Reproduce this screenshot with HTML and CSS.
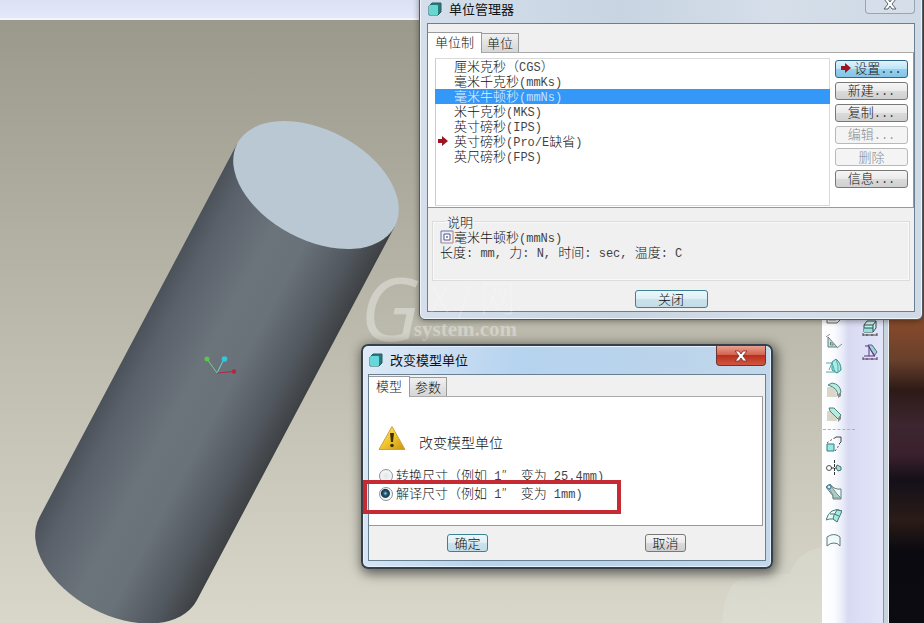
FILE: index.html
```html
<!DOCTYPE html>
<html lang="zh-CN">
<head>
<meta charset="utf-8">
<title>单位管理器</title>
<link rel="stylesheet" href="styles.css">
</head>
<body>
<div class="app">
  <main class="workspace">
    <div class="topbar"></div>
    <svg class="scene" viewBox="0 20 822 603" preserveAspectRatio="xMinYMin slice" aria-hidden="true">
      <defs>
        <linearGradient id="side" x1="0" x2="1" y1="0" y2="0">
          <stop offset="0" stop-color="#4c525a"/>
          <stop offset=".12" stop-color="#5a616a"/>
          <stop offset=".4" stop-color="#6b737b"/>
          <stop offset=".6" stop-color="#697179"/>
          <stop offset=".85" stop-color="#51575e"/>
          <stop offset="1" stop-color="#3e4144"/>
        </linearGradient>
      </defs>
      <path d="M722 623Q724 590 738 580Q760 574 790 574Q796 552 822 547V623Z" fill="#fff" opacity=".13"/>
      <g transform="translate(316 185) rotate(27.900)">
        <path d="M-89 0V423A89 56 0 0 0 89 423V0Z" fill="url(#side)"/>
        <ellipse rx="89" ry="55" fill="#b9c8d3"/>
      </g>
      <g fill="none" stroke-width="1">
        <path d="M217 373L207 359" stroke="#6fd08a"/>
        <path d="M217 373L224 359" stroke="#6fd9d6"/>
        <path d="M217 373L234 371.500" stroke="#a82c48"/>
      </g>
      <circle cx="207" cy="359" r="2.500" fill="#58c84a"/>
      <circle cx="224.500" cy="359" r="2.800" fill="#35c6dc"/>
      <circle cx="234" cy="371.500" r="2.200" fill="#b32743"/>
    </svg>
  </main>

  <aside class="toolbar">
    <div class="tools">
      <svg viewBox="0 0 16 16"><path d="M1 7V13H11L15 9V5" fill="#eee" stroke="#666"/><path d="M3 10H10" stroke="#999"/></svg>
      <svg viewBox="0 0 16 16"><path d="M2 3V13H11ZM4.500 8V11H7.500Z" fill="#c8e8e2" fill-rule="evenodd" stroke="#607c78"/><path d="M0 3L4 0M11 14L16 10" stroke="#889"/></svg>
      <svg viewBox="0 0 16 16"><path d="M6 4L10 1Q15 5 15 12L11 15L6 12Z" fill="#a9ece7" stroke="#368a88"/><path d="M0 5H6L9 14H0M6 5L3 12M10 1L12 8V14" stroke="#55aaa8"/></svg>
      <svg viewBox="0 0 16 16"><path d="M1 5H6Q11 8 11 15H1Z" fill="#d9d8c8"/><path d="M2 3L6 1Q14 2 15 10L12 14Q12 6 2 3Z" fill="#b4ece2" stroke="#51817b"/><path d="M12 13L15 10V14L12 16Z" fill="#888"/></svg>
      <svg viewBox="0 0 16 16"><path d="M1 5H6L11 9V15H1Z" fill="#d9d8c8"/><path d="M3 2H8L15 9L12 13L4 5Z" fill="#b4ece2" stroke="#51817b"/><path d="M12 13L15 9V13L12 16Z" fill="#888"/></svg>
      <hr class="divider">
      <svg viewBox="0 0 16 16"><path d="M1 8H8V15H1Z" fill="#9ce6e3" stroke="#347d7c"/><path d="M8 2.500L10 1H15V6L13 8" stroke="#444"/><path d="M1 7L8 2M9 15L14 8" stroke="#555" stroke-dasharray="2 2"/></svg>
      <svg viewBox="0 0 16 16"><circle cx="3" cy="8" r="2.500" stroke="#555"/><path d="M5 8H11M8.500 0V16" stroke="#333" stroke-dasharray="3 1"/><path d="M11 5L15 7V10L12 11L10 8Z" fill="#a9ddd6" stroke="#446e68"/></svg>
      <svg viewBox="0 0 16 16"><path d="M0 3L4 0Q8 6 15 5V15H7V12Z" fill="#f2fbfb" stroke="#5a807b"/><path d="M2 3L5 2L11 10L15 14H7V11Z" fill="#a6cfc7" stroke="#888"/><circle cx="3" cy="3" r="2" fill="#bff" stroke="#468"/></svg>
      <svg viewBox="0 0 16 16"><path d="M0 12Q2 5 6 3Q11 0 16 3Q12 7 11 14Q8 9 0 12Z" fill="#e7faf7" stroke="#4b7b78"/><path d="M8 7L11 2L16 3L11 14L7 11Z" fill="#a7e8e0" stroke="#4b7b78"/><path d="M4 6Q8 5 13 8" stroke="#4b7b78"/></svg>
      <svg viewBox="0 0 16 16"><path d="M1 14V5Q8 0 14 5V14Q12 11 8 11Q4 11 1 14Z" fill="#effbfb" stroke="#5f7775"/></svg>
    </div>
    <div class="tools tools-b">
      <svg viewBox="0 0 16 16"><path d="M2 5L5 1H14V8L11 12H2Z" fill="#c8f4f2" stroke="#394b4b"/><path d="M2 8H11V12H2Z" fill="#8fe3df"/><path d="M2 5H11V12M11 5L14 1M2 8H11" stroke="#394b4b"/><path d="M1 15H15M1 13V16M15 13V16M5 14V16M10 14V16" stroke="#444"/></svg>
      <svg viewBox="0 0 16 16"><path d="M6 1H10L15 8L12 12Z" fill="#a8cdda" stroke="#4b6b83"/><path d="M3 2H7V12H2M7 3L13 12H7" stroke="#5c2f87"/><path d="M1 15H15M1 13V16M15 13V16M5 14V16M10 14V16" stroke="#523d63"/></svg>
    </div>
  </aside>
  <div class="edge"></div>
  <div class="desktop"></div>
</div>

<section class="window manager" aria-label="单位管理器">
  <header class="titlebar">
    <svg class="cube" viewBox="0 0 14 14"><path d="M1 4L4 1H13V10L10 13H1Z" fill="#2a7a7c" stroke="#245e62"/><rect x="1" y="3" width="9" height="10" rx="1" fill="#66d8cf"/></svg>
    <h1>单位管理器</h1>
    <button class="close" aria-label="关闭窗口"><svg viewBox="0 0 14 12"><path d="M1 1H5L7 4L9 1H13L9 6L13 11H9L7 8L5 11H1L5 6Z" fill="#fff" stroke="#59616a"/></svg></button>
  </header>
  <div class="client">
    <nav class="tabs"><button class="tab on">单位制</button><button class="tab">单位</button></nav>
    <div class="panel systems">
      <ul class="list">
        <li>厘米克秒（<span class="en">CGS</span>）</li>
        <li>毫米千克秒<span class="en">(mmKs)</span></li>
        <li class="selected">毫米牛顿秒<span class="en">(mmNs)</span></li>
        <li>米千克秒<span class="en">(MKS)</span></li>
        <li>英寸磅秒<span class="en">(IPS)</span></li>
        <li class="current"><svg class="arrow" viewBox="0 0 10 10"><path d="M0 3H4V0L10 5L4 10V7H0Z" fill="#9e1420"/></svg>英寸磅秒<span class="en">(Pro/E</span>缺省<span class="en">)</span></li>
        <li>英尺磅秒<span class="en">(FPS)</span></li>
      </ul>
      <div class="actions">
        <button class="btn hot"><svg class="arrow" viewBox="0 0 10 10"><path d="M0 3H4V0L10 5L4 10V7H0Z" fill="#9e1420"/></svg><span>设置<span class="en">...</span></span></button>
        <button class="btn"><span>新建<span class="en">...</span></span></button>
        <button class="btn"><span>复制<span class="en">...</span></span></button>
        <button class="btn" disabled><span>编辑<span class="en">...</span></span></button>
        <button class="btn" disabled><span>删除</span></button>
        <button class="btn"><span>信息<span class="en">...</span></span></button>
      </div>
    </div>
    <fieldset class="notes">
      <legend>说明</legend>
      <p><svg class="note-icon" viewBox="0 0 14 14"><path d="M1 13V1H13" fill="none" stroke="#6670a8"/><path d="M13 1V13H1" fill="none" stroke="#b58080"/><path d="M4 4H10V10H4Z" fill="#fff" stroke="#4a569a"/><path d="M6 6H8V8H6Z" fill="#8a93c0"/></svg>毫米牛顿秒<span class="en">(mmNs)</span></p>
      <p>长度<span class="en">: mm, </span>力<span class="en">: N, </span>时间<span class="en">: sec, </span>温度<span class="en">: C</span></p>
    </fieldset>
    <footer class="foot"><button class="btn ok wide">关闭</button></footer>
  </div>
</section>

<div class="mark" aria-hidden="true"><span class="mark-g">G</span><span class="mark-rest"><span class="mark-x">X / 网</span><span class="mark-s">system.com</span></span></div>

<section class="window convert" aria-label="改变模型单位">
  <header class="titlebar">
    <svg class="cube" viewBox="0 0 14 14"><path d="M1 4L4 1H13V10L10 13H1Z" fill="#2a7a7c" stroke="#245e62"/><rect x="1" y="3" width="9" height="10" rx="1" fill="#66d8dc"/></svg>
    <h2>改变模型单位</h2>
    <button class="close red" aria-label="关闭窗口"><svg viewBox="0 0 14 12"><path d="M1 1H5L7 4L9 1H13L9 6L13 11H9L7 8L5 11H1L5 6Z" fill="#fff" stroke="#8b3a34"/></svg></button>
  </header>
  <div class="client">
    <nav class="tabs"><button class="tab on">模型</button><button class="tab">参数</button></nav>
    <div class="panel choice">
      <div class="prompt">
        <svg class="warn" viewBox="0 0 28 26"><defs><linearGradient id="gold" x1="0" x2="1" y1="0" y2="1"><stop offset="0" stop-color="#ffe98a"/><stop offset=".5" stop-color="#f2c52c"/><stop offset="1" stop-color="#c99212"/></linearGradient></defs><path d="M14 1.500L27 24.500H1Z" fill="url(#gold)" stroke="#cba341" stroke-linejoin="round"/><path d="M12 8H16L15 17H13Z" fill="#3c3208"/><circle cx="14" cy="20.500" r="1.800" fill="#3c3208"/></svg>
        <p>改变模型单位</p>
      </div>
      <label class="option"><input type="radio" name="mode"><span>转换尺寸（例如<span class="en"> 1</span><span class="inch">″</span><span class="en"> </span>变为<span class="en"> 25.4mm)</span></span></label>
      <label class="option"><input type="radio" name="mode" checked><span>解译尺寸（例如<span class="en"> 1</span><span class="inch">″</span><span class="en"> </span>变为<span class="en"> 1mm)</span></span></label>
    </div>
    <footer class="foot"><button class="btn ok">确定</button><button class="btn">取消</button></footer>
  </div>
  <div class="highlight"></div>
</section>
</body>
</html>
```
FILE: styles.css
```css
* { box-sizing: border-box; }
body {
  margin: 0;
  overflow: hidden;
  font: 13px/15px "Noto Sans CJK SC", sans-serif;
  font-weight: 300;
  color: #111;
}
h1, h2, p, ul { margin: 0; padding: 0; }
button { font: inherit; color: inherit; padding: 0; }
.en {
  font-family: "Liberation Mono", monospace;
  font-size: 12px;
  line-height: 12px;
  white-space: pre;
  opacity: .8;
}
.inch { display: inline-block; width: 12px; }

.app { display: flex; height: 100vh; }
.workspace {
  flex: 1;
  min-width: 0;
  display: flex;
  flex-direction: column;
  background: linear-gradient(#9a998b 20px, #aeac9f 200px, #bfbdaf 360px, #d8d7ca);
}
.topbar {
  height: 20px;
  flex: none;
  background: linear-gradient(#dce2f5, #e3e8fa);
  border-bottom: 2px solid #f3f5fb;
}
.scene { flex: 1; min-height: 0; width: 100%; display: block; }

.toolbar {
  width: 61px;
  display: flex;
  gap: 20px;
  padding: 310px 4px 0;
  background: linear-gradient(90deg, #fff 0, #fbfcff 12px, #eaedf9 20px, #d8daf1 26px, #dcdff5 40px, #e3e5f8);
}
.tools { display: flex; flex-direction: column; gap: 8px; width: 16px; }
.tools-b { padding-top: 10px; }
.tools svg { width: 16px; height: 16px; flex: none; fill: none; }
.divider {
  width: 32px;
  height: 0;
  margin: -1px 0 -2px -3px;
  border: 0;
  border-top: 1px dashed #aab0be;
}
.edge { width: 6px; background: #c8d3dc; border-left: 1px solid #89949c; border-right: 1px solid #eef2f5; }
.desktop {
  width: 35px;
  background: linear-gradient(#6b4028 0, #85492b 325px, #68402c 360px, #2d1a16 390px, #3d2630 425px, #3a202c 455px, #141019 480px, #2a1c18 520px, #0b0a10 550px, #0c0b12);
}

.window {
  position: absolute;
  display: flex;
  flex-direction: column;
  padding: 0 7px 7px;
  border: 1px solid #4e5a64;
}
.manager {
  top: -9px;
  left: 419px;
  width: 504px;
  border-radius: 6px;
  background: linear-gradient(90deg, #d5dfec, #c8d4e2 40%, #d5dee9 70%, #cfdae6);
  box-shadow: inset 0 0 0 1px #eef4fa, 0 1px 6px rgba(0, 0, 0, .4);
}
.convert {
  top: 344px;
  left: 361px;
  width: 412px;
  border: 2px solid #35404a;
  padding: 0 5px 6px;
  border-radius: 7px;
  background: linear-gradient(100deg, #dfeaf6 0, #b6d3ef 35%, #b9d3ec 60%, #c4d8ea);
  box-shadow: inset 0 0 0 1px #e4f0fb, 2px 3px 12px 2px rgba(0, 0, 0, .55);
}
.titlebar { display: flex; align-items: center; gap: 7px; height: 31px; padding: 2px 0 0 1px; color: #111; }
.convert .titlebar { height: 28px; padding-top: 0; }
.titlebar h1, .titlebar h2 { flex: 1; font-size: 13px; line-height: 15px; font-weight: 400; }
.convert .titlebar h2 { padding-bottom: 2px; }
.cube { width: 14px; height: 14px; }
.close {
  align-self: flex-start;
  display: flex;
  align-items: flex-end;
  justify-content: center;
  width: 50px;
  height: 20px;
  padding-bottom: 3px;
  border: 1px solid #98a5b3;
  border-top: 0;
  border-radius: 0 0 4px 4px;
  background: #d5dee9;
}
.close svg { width: 14px; height: 12px; }
.close.red {
  border-color: #6b3535;
  background: linear-gradient(#e9a091, #d36450 45%, #b9301f 50%, #d2563f);
}

.client { display: flex; flex-direction: column; border: 1px solid #68808f; background: #f0f0f0; }
.tabs { display: flex; align-items: flex-end; height: 28px; }
.convert .tabs { height: 21px; }
.tab {
  height: 19px;
  padding: 0 5px 1px;
  border: 1px solid #9b9b9b;
  border-left: 0;
  border-bottom: 0;
  background: linear-gradient(#f0f0f0, #d6d6d6);
}
.tab.on { height: 21px; padding: 0 7px 4px; background: #fff; margin-bottom: -1px; z-index: 1; }
.panel { background: #fff; border: 1px solid #999; border-left: 0; border-top-color: #aaa; }
.convert .panel { margin-right: 2px; }

.systems { display: flex; gap: 5px; padding: 5px 5px 1px 7px; }
.list {
  flex: 1;
  height: 148px;
  list-style: none;
  border: 1px solid #d9d9d9;
  border-left-color: #ccc;
}
.list li { display: flex; align-items: baseline; height: 15px; line-height: 13px; padding-left: 18px; white-space: pre; }
.list .selected { background: #3398f8; color: #e6f3ff; margin: 0 -1px; padding-left: 19px; }
.arrow { width: 10px; height: 10px; flex: none; }
.list .current { padding-left: 2px; }
.list .arrow { align-self: flex-start; margin: 2px 6px 0 0; }
.actions { display: flex; flex-direction: column; gap: 4px; width: 73px; padding-top: 2px; }
.btn {
  display: flex;
  align-items: center;
  justify-content: center;
  gap: 3px;
  min-width: 41px;
  height: 18px;
  line-height: 13px;
  padding-bottom: 2px;
  border: 1px solid #787878;
  border-radius: 3px;
  background: linear-gradient(#f5f5f5, #eaeaea 50%, #dadada 52%, #d0d0d0);
}
.btn:disabled { color: #8a8a8a; border-color: #b9b9b9; background: #f4f4f4; }
.btn.hot { border-color: #2f6685; background: linear-gradient(#e0f3fc, #bce3f7 50%, #94cfee 52%, #86c4e4); }
.btn.ok { border-color: #3c8296; background: linear-gradient(#edf7fa, #deeff5 50%, #cbe2ec 52%, #c3dce7); }
.btn.wide { width: 73px; }

.notes {
  margin: 7px 4px 0;
  padding: 2px 7px 0;
  height: 66px;
  border: 1px solid #dcdcdc;
  box-shadow: inset 0 0 0 1px #f9f9f9;
}
.notes legend { padding: 0 1px; margin-left: 6px; line-height: 13px; }
.notes p { display: flex; align-items: baseline; height: 15px; line-height: 13px; white-space: pre; }
.note-icon { width: 14px; height: 14px; align-self: flex-start; }
.foot { display: flex; justify-content: center; padding: 9px 0 3px; }

.choice { height: 130px; padding: 28px 9px 0; }
.prompt { display: flex; gap: 13px; height: 42px; font-size: 14px; line-height: 14px; }
.prompt p { padding-top: 10px; }
.warn { width: 28px; height: 26px; }
.option { display: flex; align-items: center; gap: 3px; height: 18px; line-height: 13px; white-space: pre; }
.option > span { padding-bottom: 2px; }
.option input {
  appearance: none;
  flex: none;
  width: 14px;
  height: 14px;
  margin: 0 0 0 1px;
  border: 1px solid #8b9299;
  border-radius: 50%;
  background: radial-gradient(#e2e5e8, #fff);
}
.option input:checked { background: radial-gradient(circle at 45% 45%, #9bd7ea 0, #245a75 2px, #14384f 4px, #f4f7f9 5px); }
.convert .foot { justify-content: space-between; padding: 8px 79px 8px 78px; }
.highlight {
  position: absolute;
  left: 0;
  top: 134px;
  width: 258px;
  height: 34px;
  border: 4px solid #c62a33;
}

.mark {
  position: absolute;
  left: 360px;
  top: 267px;
  display: flex;
  color: rgba(255, 255, 255, .35);
  pointer-events: none;
}
.mark-g { font: italic 88px/80px "Open Sans", sans-serif; }
.mark-rest { display: flex; flex-direction: column; padding-top: 8px; margin-left: -6px; }
.mark-x { font-size: 36px; line-height: 42px; padding-left: 16px; opacity: .6; }
.mark-s { font: bold 21px/24px "Liberation Serif", serif; }
```
